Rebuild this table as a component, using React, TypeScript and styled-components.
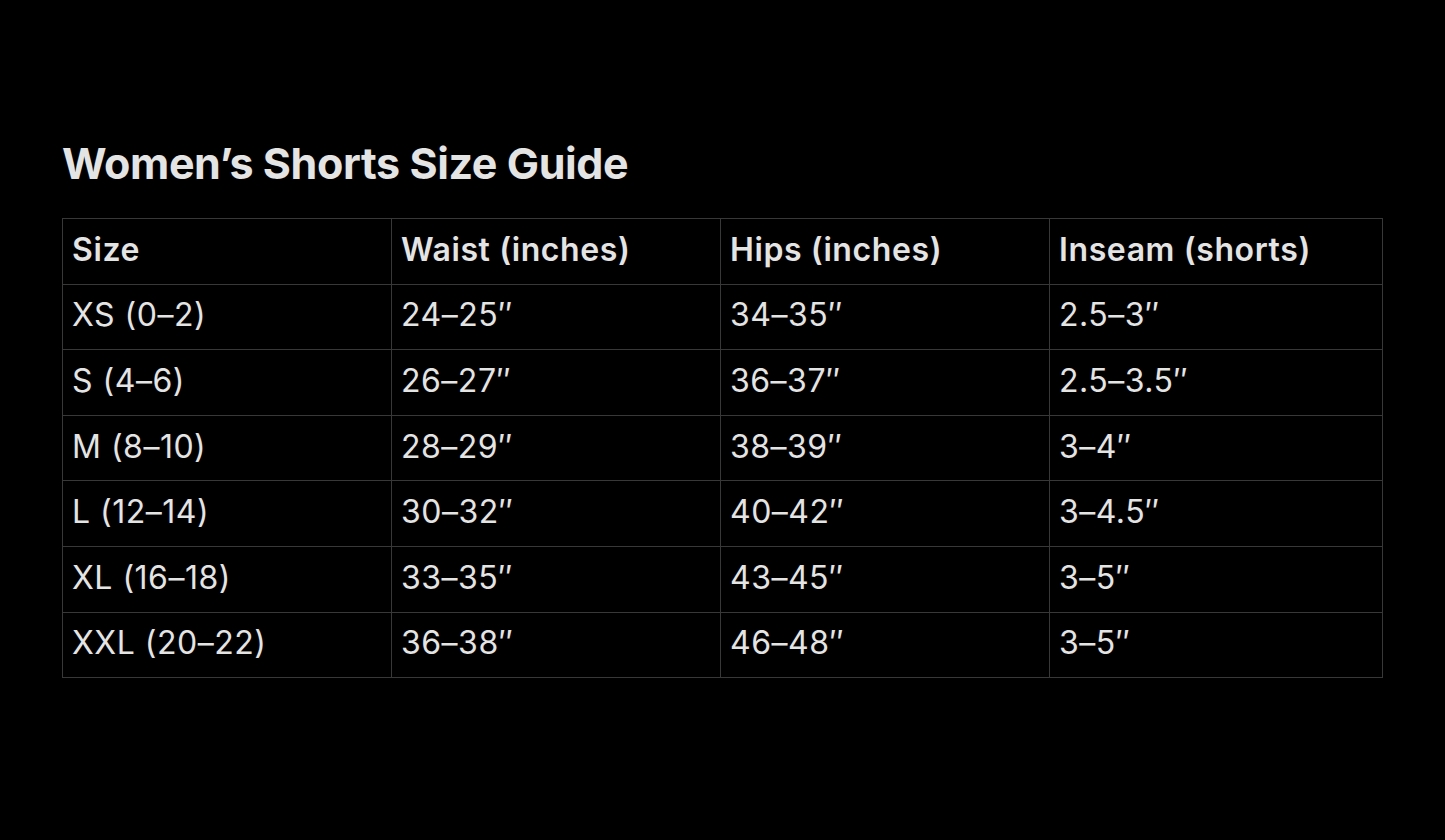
import React from 'react'
import styled, { createGlobalStyle } from 'styled-components'

const GlobalStyle = createGlobalStyle`
  html, body {
    margin: 0;
    padding: 0;
    background: #000000;
  }

  body {
    font-family: Inter, "Noto Sans", "Liberation Sans", sans-serif;
    color: #e6e6e6;
  }
`

const Page = styled.div`
  width: 1445px;
  height: 840px;
  box-sizing: border-box;
  padding: 137px 63px 0 62px;
  background: #000000;
`

const Title = styled.h1`
  margin: 0 0 28px 0;
  font-size: 43px;
  line-height: 53px;
  font-weight: 650;
  letter-spacing: -0.4px;
  color: #e4e4e4;
`

const Table = styled.table`
  width: 1320px;
  border-collapse: collapse;
  table-layout: fixed;
`

const Col = styled.col<{ $width: number }>`
  width: ${(p) => p.$width}px;
`

const cellBase = `
  height: 65.6px;
  box-sizing: border-box;
  padding: 0 9px 4px 9px;
  border: 1px solid #383838;
  font-size: 32px;
  color: #e4e4e4;
  text-align: left;
  vertical-align: middle;
  white-space: nowrap;
`

const HeadCell = styled.th`
  ${cellBase}
  font-weight: 580;
  letter-spacing: 0.6px;
`

const BodyCell = styled.td`
  ${cellBase}
  font-weight: 400;
  letter-spacing: 0.5px;
`

const columns = ['Size', 'Waist (inches)', 'Hips (inches)', 'Inseam (shorts)']
const widths = [329, 329, 329, 333]

const rows = [
  ['XS (0–2)', '24–25″', '34–35″', '2.5–3″'],
  ['S (4–6)', '26–27″', '36–37″', '2.5–3.5″'],
  ['M (8–10)', '28–29″', '38–39″', '3–4″'],
  ['L (12–14)', '30–32″', '40–42″', '3–4.5″'],
  ['XL (16–18)', '33–35″', '43–45″', '3–5″'],
  ['XXL (20–22)', '36–38″', '46–48″', '3–5″'],
]

const App = () => (
  <>
    <GlobalStyle />
    <Page>
      <Title>Women’s Shorts Size Guide</Title>
      <Table>
        <colgroup>
          {widths.map((w, i) => (
            <Col key={`col-${i}`} $width={w} />
          ))}
        </colgroup>
        <thead>
          <tr>
            {columns.map((c) => (
              <HeadCell key={c}>{c}</HeadCell>
            ))}
          </tr>
        </thead>
        <tbody>
          {rows.map((row) => (
            <tr key={row[0]}>
              {row.map((v, i) => (
                <BodyCell key={`${row[0]}-${i}`}>{v}</BodyCell>
              ))}
            </tr>
          ))}
        </tbody>
      </Table>
    </Page>
  </>
)

export default App
